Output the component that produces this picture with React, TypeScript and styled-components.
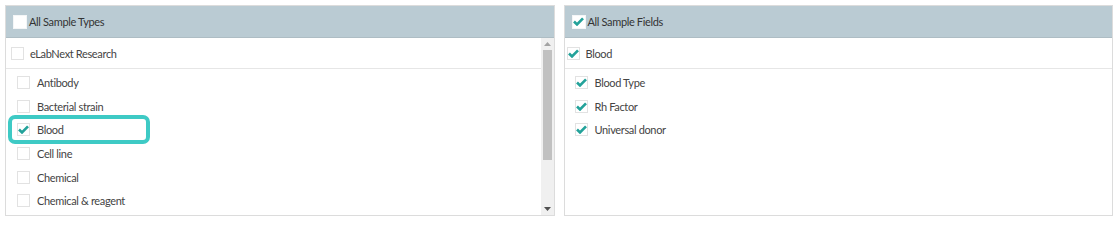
import React from 'react';
import styled, { createGlobalStyle } from 'styled-components';

const GlobalStyle = createGlobalStyle`
  html, body {
    margin: 0;
    padding: 0;
    background: #fff;
  }
  body {
    font-family: 'Lato', 'Open Sans', sans-serif;
    font-size: 11px;
    letter-spacing: -0.35px;
    color: #444;
  }
`;

const Page = styled.div`
  display: flex;
  gap: 9px;
  padding: 5px 7px 5px 5px;
  height: 211px;
`;

const Panel = styled.div`
  flex: 1;
  display: flex;
  flex-direction: column;
  border: 1px solid #dcdcdc;
  min-width: 0;
`;

const Header = styled.div`
  display: flex;
  align-items: center;
  gap: 2px;
  height: 31px;
  padding-left: 7px;
  background-color: #bacbd3;
  border-bottom: 1px solid #aebdc4;
  color: #333;
  flex-shrink: 0;
`;

const Body = styled.div`
  flex: 1;
  display: flex;
  min-height: 0;
`;

const List = styled.div`
  flex: 1;
  overflow: hidden;
`;

const GroupRow = styled.div<{ $indent: number }>`
  display: flex;
  align-items: center;
  gap: 6px;
  height: 30px;
  padding-left: ${(p) => p.$indent}px;
  border-bottom: 1px solid #e6e6e6;
`;

const Items = styled.div`
  padding-top: 2px;
`;

const ItemRow = styled.div<{ $indent: number; $highlight?: boolean }>`
  position: relative;
  display: flex;
  align-items: center;
  gap: 7px;
  height: 23.6px;
  padding-left: ${(p) => p.$indent}px;

  &::after {
    content: '';
    display: ${(p) => (p.$highlight ? 'block' : 'none')};
    position: absolute;
    left: 2px;
    top: -3px;
    width: 142px;
    height: 29px;
    box-sizing: border-box;
    border: 4px solid #3ecac5;
    border-radius: 7px;
  }
`;

const Box = styled.span<{ $size: number; $plain?: boolean }>`
  display: inline-flex;
  align-items: center;
  justify-content: center;
  box-sizing: border-box;
  width: ${(p) => p.$size}px;
  height: ${(p) => p.$size}px;
  background: #fff;
  border: 1px solid ${(p) => (p.$plain ? '#f4f6f7' : '#e2e2e2')};
  flex-shrink: 0;
`;

const Scrollbar = styled.div`
  width: 13px;
  display: flex;
  flex-direction: column;
  align-items: center;
  background: #f0f0f0;
  flex-shrink: 0;
`;

const Arrow = styled.div<{ $dark?: boolean }>`
  height: 12px;
  display: flex;
  align-items: center;
  justify-content: center;
  color: ${(p) => (p.$dark ? '#505050' : '#a3a3a3')};
`;

const Thumb = styled.div`
  width: 9px;
  height: 110px;
  background: #c1c1c1;
`;

const Track = styled.div`
  flex: 1;
  display: flex;
  justify-content: center;
`;

const Check: React.FC = () => (
  <svg width="11" height="9" viewBox="0 0 11 9">
    <path d="M1 4.6 L4 7.4 L10 1.4" fill="none" stroke="#23a29a" strokeWidth="2.7" />
  </svg>
);

const CheckBox: React.FC<{ checked?: boolean; size?: number; plain?: boolean }> = ({
  checked,
  size = 13,
  plain,
}) => (
  <Box $size={size} $plain={plain}>
    {checked && <Check />}
  </Box>
);

const SAMPLE_TYPES = [
  { name: 'Antibody', checked: false },
  { name: 'Bacterial strain', checked: false },
  { name: 'Blood', checked: true, highlight: true },
  { name: 'Cell line', checked: false },
  { name: 'Chemical', checked: false },
  { name: 'Chemical & reagent', checked: false },
];

const SAMPLE_FIELDS = ['Blood Type', 'Rh Factor', 'Universal donor'];

const App: React.FC = () => {
  return (
    <>
      <GlobalStyle />
      <Page>
        <Panel>
          <Header>
            <CheckBox size={14} plain />
            <span>All Sample Types</span>
          </Header>
          <Body>
            <List>
              <GroupRow $indent={5}>
                <CheckBox />
                <span>eLabNext Research</span>
              </GroupRow>
              <Items>
                {SAMPLE_TYPES.map((t) => (
                  <ItemRow key={t.name} $indent={11} $highlight={t.highlight}>
                    <CheckBox checked={t.checked} />
                    <span>{t.name}</span>
                  </ItemRow>
                ))}
              </Items>
            </List>
            <Scrollbar>
              <Arrow>
                <svg width="7" height="4" viewBox="0 0 7 4">
                  <path d="M0 4 L3.5 0 L7 4 Z" fill="currentColor" />
                </svg>
              </Arrow>
              <Track>
                <Thumb />
              </Track>
              <Arrow $dark>
                <svg width="7" height="4" viewBox="0 0 7 4">
                  <path d="M0 0 L3.5 4 L7 0 Z" fill="currentColor" />
                </svg>
              </Arrow>
            </Scrollbar>
          </Body>
        </Panel>
        <Panel>
          <Header>
            <CheckBox size={14} checked plain />
            <span>All Sample Fields</span>
          </Header>
          <List>
            <GroupRow $indent={2}>
              <CheckBox checked />
              <span>Blood</span>
            </GroupRow>
            <Items>
              {SAMPLE_FIELDS.map((f) => (
                <ItemRow key={f} $indent={10}>
                  <CheckBox checked />
                  <span>{f}</span>
                </ItemRow>
              ))}
            </Items>
          </List>
        </Panel>
      </Page>
    </>
  );
};

export default App;
